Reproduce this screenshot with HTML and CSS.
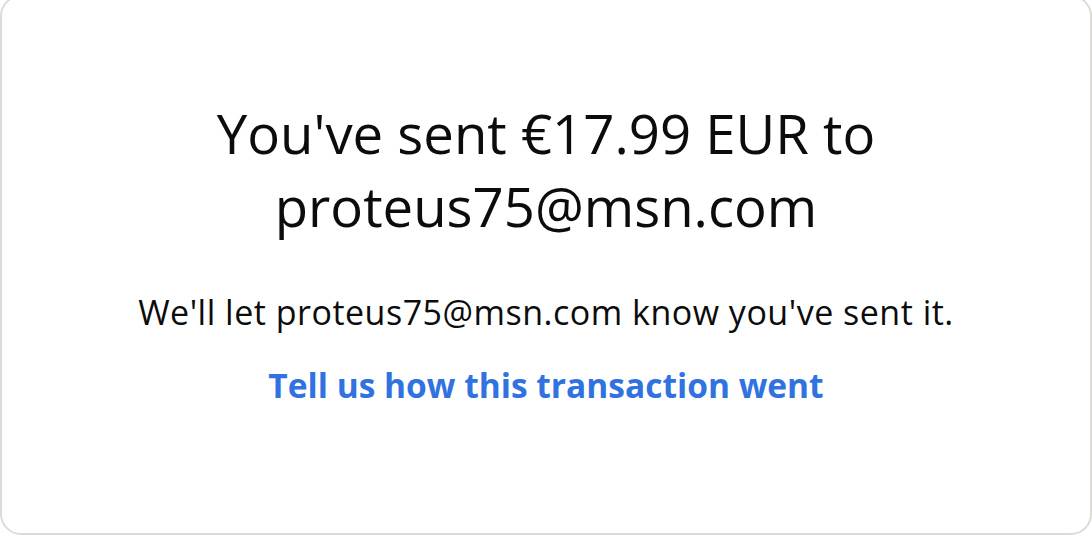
FILE: index.html
```html
<!DOCTYPE html>
<html lang="en">
<head>
<meta charset="utf-8">
<title>Payment sent</title>
<link rel="stylesheet" href="styles.css">
</head>
<body>
<main class="card">
  <h1 class="headline">You've sent €17.99 EUR to<br>proteus75@msn.com</h1>
  <p class="note">We'll let proteus75@msn.com know you've sent it.</p>
  <a class="feedback" href="#">Tell us how this transaction went</a>
</main>
</body>
</html>
```
FILE: styles.css
```css
html, body {
  margin: 0;
  padding: 0;
  background: #ffffff;
}

body {
  font-family: "Open Sans", "Noto Sans", sans-serif;
  color: #0c0c0d;
  overflow: hidden;
}

.card {
  box-sizing: border-box;
  width: 1092px;
  height: 540px;
  margin-top: -5px;
  border: 2px solid #dcdbd7;
  border-radius: 21px;
  background: #ffffff;
  display: flex;
  flex-direction: column;
  align-items: center;
  padding-top: 100px;
  text-align: center;
}

.headline {
  margin: 0;
  font-size: 54.5px;
  font-weight: 400;
  line-height: 73px;
  letter-spacing: 0;
}

.note {
  margin: 47px 0 0;
  font-size: 34px;
  line-height: 44px;
  letter-spacing: 0.5px;
}

.feedback {
  margin-top: 29px;
  font-size: 33.5px;
  font-weight: 700;
  line-height: 44px;
  color: #3073e0;
  text-decoration: none;
}
```
